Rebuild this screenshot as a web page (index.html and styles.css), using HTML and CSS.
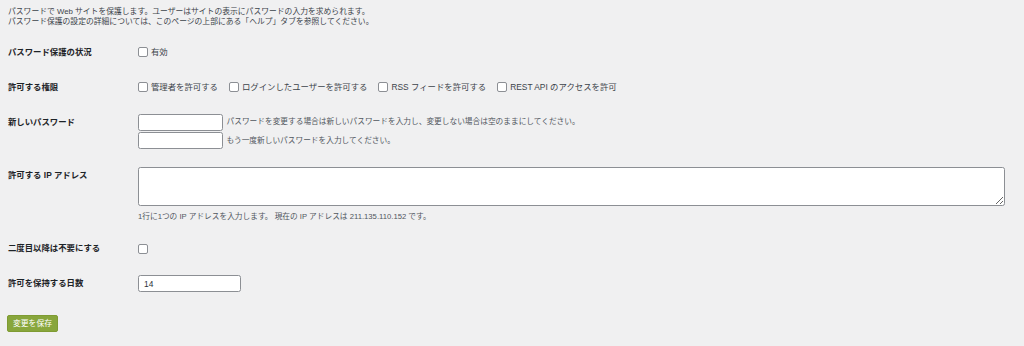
FILE: index.html
```html
<!DOCTYPE html>
<html lang="ja">
<head>
<meta charset="utf-8">
<title>パスワード保護</title>
<link rel="stylesheet" href="styles.css">
</head>
<body>
<div class="wrap">
  <div class="intro">
    <p>パスワードで Web サイトを保護します。ユーザーはサイトの表示にパスワードの入力を求められます。</p>
    <p>パスワード保護の設定の詳細については、このページの上部にある「ヘルプ」タブを参照してください。</p>
  </div>

  <div class="form">
    <div class="row">
      <div class="th">パスワード保護の状況</div>
      <div class="td">
        <label class="opt"><input type="checkbox" class="cb"><span>有効</span></label>
      </div>
    </div>

    <div class="row">
      <div class="th">許可する権限</div>
      <div class="td">
        <div class="opts">
          <label class="opt"><input type="checkbox" class="cb"><span>管理者を許可する</span></label>
          <label class="opt"><input type="checkbox" class="cb"><span>ログインしたユーザーを許可する</span></label>
          <label class="opt"><input type="checkbox" class="cb"><span>RSS フィードを許可する</span></label>
          <label class="opt"><input type="checkbox" class="cb"><span>REST API のアクセスを許可</span></label>
        </div>
      </div>
    </div>

    <div class="row">
      <div class="th">新しいパスワード</div>
      <div class="td">
        <div class="pwline"><input type="password" class="text short"><span class="desc">パスワードを変更する場合は新しいパスワードを入力し、変更しない場合は空のままにしてください。</span></div>
        <div class="pwline"><input type="password" class="text short"><span class="desc">もう一度新しいパスワードを入力してください。</span></div>
      </div>
    </div>

    <div class="row">
      <div class="th">許可する IP アドレス</div>
      <div class="td wide">
        <textarea class="area"></textarea>
        <p class="desc below">1行に1つの IP アドレスを入力します。 現在の IP アドレスは 211.135.110.152 です。</p>
      </div>
    </div>

    <div class="row">
      <div class="th">二度目以降は不要にする</div>
      <div class="td">
        <label class="opt"><input type="checkbox" class="cb"></label>
      </div>
    </div>

    <div class="row">
      <div class="th">許可を保持する日数</div>
      <div class="td">
        <input type="text" class="text days" value="14">
      </div>
    </div>
  </div>

  <div class="submit">
    <button type="button" class="btn">変更を保存</button>
  </div>
</div>
</body>
</html>
```

FILE: styles.css
```css
html, body {
  margin: 0;
  padding: 0;
  background: #f0f0f1;
}
body {
  font-family: "Liberation Sans", "Noto Sans CJK JP", sans-serif;
  color: #3c434a;
  font-size: 8.4px;
}
.wrap {
  padding: 0 0 0 8px;
}
.intro {
  padding-top: 6.5px;
}
.intro p {
  margin: 0;
  font-size: 7.8px;
  line-height: 10.5px;
  color: #3c434a;
}
.form {
  margin-top: 7px;
}
.row {
  display: flex;
}
.th {
  width: 130px;
  flex: none;
  padding: 12px 0;
  line-height: 11px;
  font-weight: bold;
  color: #1d2327;
  font-size: 8.4px;
}
.td {
  flex: 1;
  padding: 9px 0;
  min-width: 0;
}
.td.wide {
  padding-right: 19px;
}
.opts {
  display: flex;
  gap: 11px;
}
.opt {
  display: flex;
  align-items: center;
  min-height: 17px;
  gap: 3px;
  color: #3c434a;
  line-height: 11px;
  white-space: nowrap;
}
.cb {
  appearance: none;
  -webkit-appearance: none;
  margin: 0;
  width: 10px;
  height: 10px;
  border: 1px solid #8c8f94;
  border-radius: 2px;
  background: #fff;
  box-sizing: border-box;
  flex: none;
}
.text {
  box-sizing: border-box;
  height: 17px;
  border: 1px solid #8c8f94;
  border-radius: 2.4px;
  background: #fff;
  margin: 0;
  padding: 0 5px;
  font-family: inherit;
  font-size: 8.4px;
  color: #2c3338;
}
.short {
  width: 85px;
}
.days {
  width: 103px;
}
.pwline {
  display: flex;
  align-items: center;
  gap: 3.5px;
  margin-bottom: 1.5px;
}
.pwline:last-child {
  margin-bottom: 0;
}
.desc {
  font-size: 7.7px;
  color: #50575e;
  line-height: 10px;
}
.area {
  display: block;
  box-sizing: border-box;
  width: 100%;
  height: 39px;
  margin: 0;
  border: 1px solid #8c8f94;
  border-radius: 2.4px;
  background: #fff;
  font-family: inherit;
  font-size: 8.4px;
}
.below {
  margin: 6px 0 0;
}
.submit {
  padding-top: 13.5px;
}
.btn {
  box-sizing: border-box;
  height: 17px;
  width: 51px;
  margin: 0 0 0 -1px;
  padding: 0;
  border: 1px solid #7f9b33;
  border-radius: 2px;
  background: #88a63c;
  color: #fff;
  font-family: inherit;
  font-size: 7.8px;
  line-height: 15px;
}
```
